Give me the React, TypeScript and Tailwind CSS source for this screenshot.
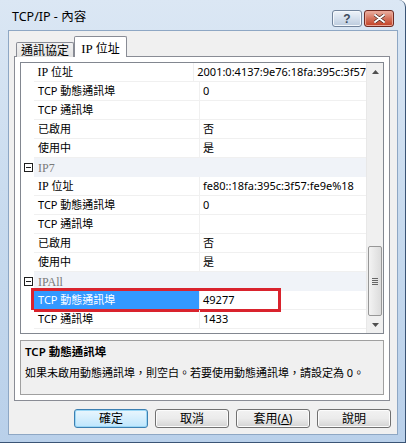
import type { ReactNode } from "react"

const ui = { fontFamily: '"Noto Sans", "Noto Sans CJK TC", sans-serif' }
const serif = { fontFamily: '"Liberation Serif", "Noto Sans CJK TC", serif' }

type Row =
  | { kind: "cat"; label: string }
  | { kind: "prop"; name: ReactNode; value?: string; selected?: boolean }

const ipName = (
  <span>
    <span style={serif} className="text-[12px]">IP</span> 位址
  </span>
)

const rows: Row[] = [
  { kind: "prop", name: ipName, value: "2001:0:4137:9e76:18fa:395c:3f57" },
  { kind: "prop", name: "TCP 動態通訊埠", value: "0" },
  { kind: "prop", name: "TCP 通訊埠", value: "" },
  { kind: "prop", name: "已啟用", value: "否" },
  { kind: "prop", name: "使用中", value: "是" },
  { kind: "cat", label: "IP7" },
  { kind: "prop", name: ipName, value: "fe80::18fa:395c:3f57:fe9e%18" },
  { kind: "prop", name: "TCP 動態通訊埠", value: "0" },
  { kind: "prop", name: "TCP 通訊埠", value: "" },
  { kind: "prop", name: "已啟用", value: "否" },
  { kind: "prop", name: "使用中", value: "是" },
  { kind: "cat", label: "IPAll" },
  { kind: "prop", name: "TCP 動態通訊埠", value: "49277", selected: true },
  { kind: "prop", name: "TCP 通訊埠", value: "1433" },
]

function CollapseBox() {
  return (
    <div className="flex h-[9px] w-[9px] items-center justify-center border border-[#1e1e1e] bg-white">
      <div className="h-px w-[5px] bg-[#1e1e1e]" />
    </div>
  )
}

function GridRow({ row }: { row: Row }) {
  if (row.kind === "cat") {
    return (
      <div className="flex h-[19px]">
        <div className="flex w-[13px] items-center justify-center bg-white pl-[1px]">
          <CollapseBox />
        </div>
        <div
          className="flex flex-1 items-center bg-[#f0f3f8] pl-[4px] text-[12px] text-[#7a7a7a]"
          style={serif}
        >
          {row.label}
        </div>
      </div>
    )
  }
  return (
    <div className="relative flex h-[19px]">
      <div className="w-[13px] bg-white" />
      <div
        className={
          row.selected
            ? "flex w-[165px] items-center border-b border-[#3399ff] bg-[#3399ff] pl-[4px] text-white"
            : "flex w-[165px] items-center border-b border-[#f0f0f0] pl-[4px] text-black"
        }
      >
        {row.name}
      </div>
      <div className="flex flex-1 items-center border-b border-l border-[#f0f0f0] pl-[3px] text-black">
        {row.value}
      </div>
      {row.selected && (
        <div className="absolute -top-[3px] left-[10px] h-[24px] w-[250px] border-[3px] border-[#d9232d]" />
      )}
    </div>
  )
}

function Scrollbar() {
  return (
    <div className="flex w-[17px] flex-col border-l border-[#e8e8e8] bg-[#f0f0f0]">
      <div className="flex h-[17px] items-center justify-center">
        <svg width="7" height="4" viewBox="0 0 7 4">
          <path d="M0 4 L3.5 0 L7 4 Z" fill="#505050" />
        </svg>
      </div>
      <div className="flex-1" />
      <div className="mx-[1px] flex h-[70px] items-center justify-center rounded-[2px] border border-[#979797] bg-gradient-to-r from-[#f3f3f3] to-[#dcdcdc]">
        <div className="flex flex-col gap-[1px]">
          <div className="h-px w-[6px] bg-[#666]" />
          <div className="h-px w-[6px] bg-[#666]" />
          <div className="h-px w-[6px] bg-[#666]" />
          <div className="h-px w-[6px] bg-[#666]" />
        </div>
      </div>
      <div className="flex h-[17px] items-center justify-center">
        <svg width="7" height="4" viewBox="0 0 7 4">
          <path d="M0 0 L3.5 4 L7 0 Z" fill="#505050" />
        </svg>
      </div>
    </div>
  )
}

function DlgButton({ children, primary }: { children: ReactNode; primary?: boolean }) {
  return (
    <div
      className={
        primary
          ? "flex h-[19px] w-[74px] items-center justify-center rounded-[3px] border border-[#3c7fb1] bg-gradient-to-b from-[#eaf6fd] to-[#bee6fd] text-[12px] text-black shadow-[inset_0_0_0_1px_#9ad7f6]"
          : "flex h-[19px] w-[74px] items-center justify-center rounded-[3px] border border-[#707070] bg-gradient-to-b from-[#f2f2f2] via-[#ebebeb] to-[#d3d3d3] text-[12px] text-black shadow-[inset_0_0_0_1px_#fcfcfc]"
      }
    >
      {children}
    </div>
  )
}

export default function App() {
  return (
    <div className="h-[443px] w-[406px] bg-white text-[11px]" style={ui}>
      <div className="flex h-[443px] w-[406px] flex-col rounded-tr-[7px] border-r border-b border-[#3a5475] bg-gradient-to-b from-[#dbe7f4] via-[#c7daee] to-[#b9d0ea]">
        {/* title bar */}
        <div className="flex h-[30px] items-start pl-[12px] pr-[11px]">
          <div className="mt-[8px] flex-1 text-[12.5px] text-black">TCP/IP - 內容</div>
          <div className="mt-[10px] flex gap-[2px]">
            <div className="flex h-[17px] w-[30px] items-center justify-center rounded-[3px] border border-[#71839b] bg-gradient-to-b from-[#eef3f9] via-[#d5e0ed] to-[#bccbdd] shadow-[inset_0_0_0_1px_#f4f8fc]">
              <span
                className="text-[12px] font-bold leading-none text-[#3d4a5c]"
                style={{ fontFamily: '"Liberation Sans", sans-serif' }}
              >
                ?
              </span>
            </div>
            <div className="flex h-[17px] w-[30px] items-center justify-center rounded-[3px] border border-[#6e2a22] bg-gradient-to-b from-[#eab1a3] via-[#d4725c] to-[#c23f22] shadow-[inset_0_0_0_1px_#eba696]">
              <svg width="11" height="9" viewBox="0 0 11 9">
                <path d="M1 1 L10 8 M10 1 L1 8" stroke="#3a1a14" strokeWidth="3.2" strokeLinecap="round" />
                <path d="M1 1 L10 8 M10 1 L1 8" stroke="#ffffff" strokeWidth="2" strokeLinecap="round" />
              </svg>
            </div>
          </div>
        </div>

        {/* client */}
        <div className="ml-[8px] mr-[7px] flex h-[405px] flex-col border border-[#8ea7c4] bg-[#f0f0f0]">
          {/* tabs */}
          <div className="relative z-10 -mb-px mt-[5px] flex h-[21px] items-end pl-[7px]">
            <div className="flex h-[15px] w-[58px] items-center justify-center rounded-t-[2px] border border-b-0 border-[#898c95] bg-gradient-to-b from-[#f2f2f2] to-[#e3e3e3] pt-[1px] text-[12px] text-black">
              通訊協定
            </div>
            <div className="flex h-[21px] w-[53px] items-start justify-center rounded-t-[2px] border border-b-0 border-[#898c95] bg-white pt-[2px] text-[12px] text-black">
              <span>
                <span style={serif} className="text-[13px]">IP</span> 位址
              </span>
            </div>
          </div>

          {/* tab panel */}
          <div className="ml-[5px] mr-[7px] flex h-[345px] flex-col border border-[#898c95] bg-white px-[5px] pt-[5px]">
            <div className="flex h-[272px] border border-[#828790] bg-white">
              <div className="flex flex-1 flex-col overflow-hidden">
                {rows.map((r, i) => (
                  <GridRow key={i} row={r} />
                ))}
              </div>
              <Scrollbar />
            </div>
            <div className="mt-[6px] flex h-[55px] flex-col border border-[#a0a0a0] bg-[#f0f0f0] px-[4px]">
              <div className="mt-[2px] text-[11.5px] font-semibold text-black">TCP 動態通訊埠</div>
              <div className="mt-[5px] whitespace-nowrap text-[11px] text-black">
                如果未啟用動態通訊埠，則空白。若要使用動態通訊埠，請設定為 0。
              </div>
            </div>
          </div>

          {/* buttons */}
          <div className="mt-[8px] flex justify-end gap-[7px] pr-[6px]">
            <DlgButton primary>確定</DlgButton>
            <DlgButton>取消</DlgButton>
            <DlgButton>
              <span>
                套用(<span className="underline">A</span>)
              </span>
            </DlgButton>
            <DlgButton>說明</DlgButton>
          </div>
        </div>
      </div>
    </div>
  )
}
